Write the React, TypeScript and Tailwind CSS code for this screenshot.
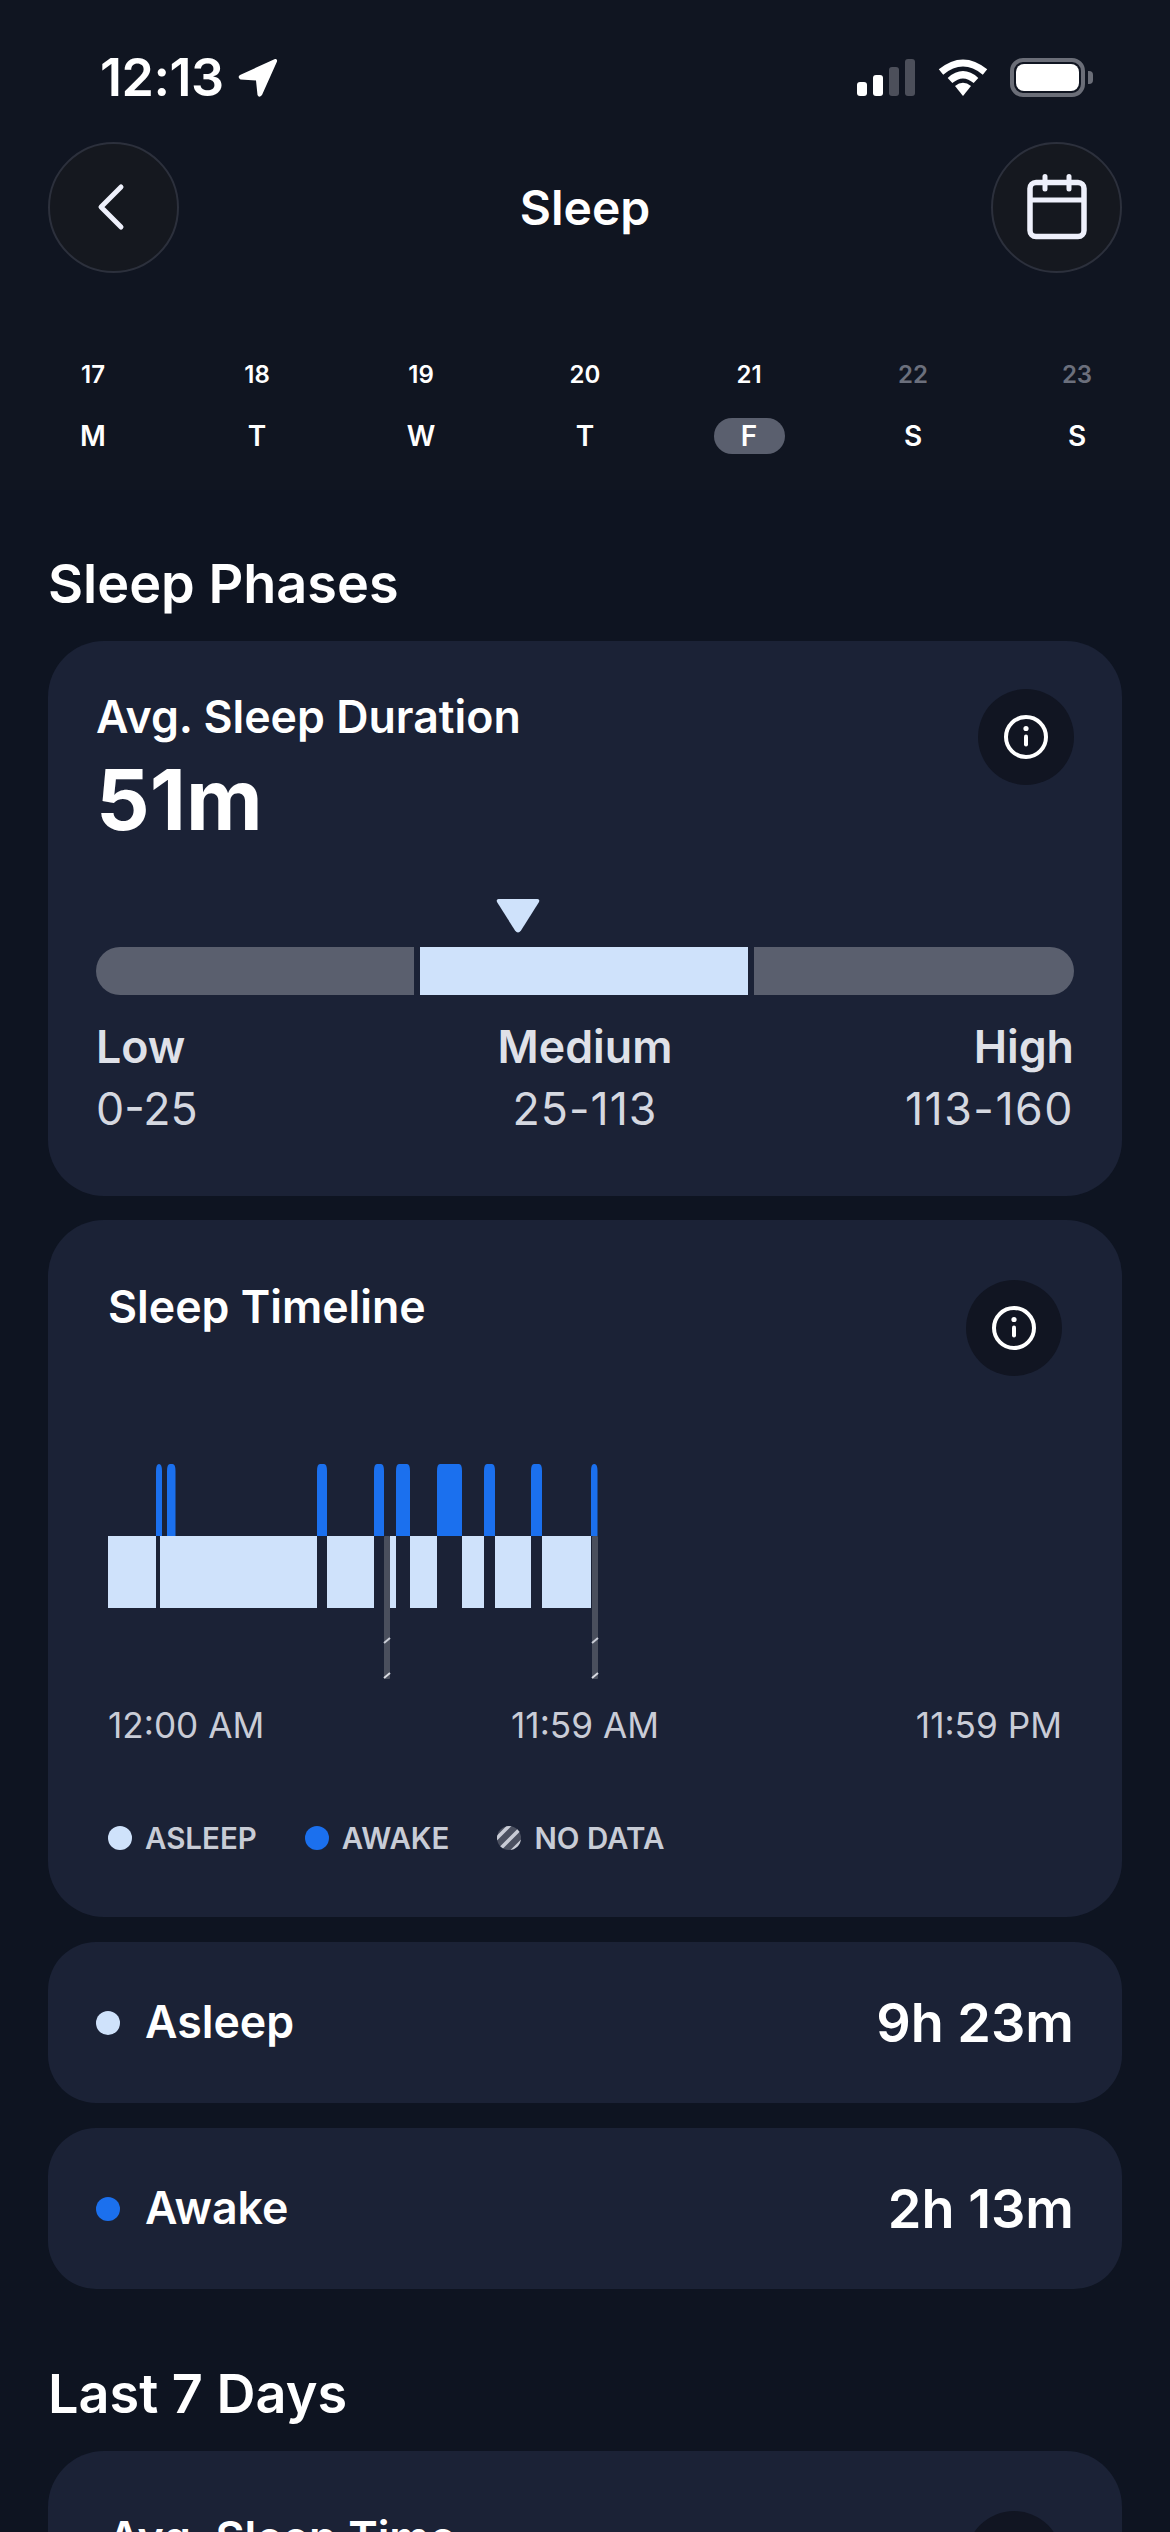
import React from "react";

const days = [
  ["17", "M", 0], ["18", "T", 0], ["19", "W", 0], ["20", "T", 0], ["21", "F", 1], ["22", "S", 2], ["23", "S", 2],
] as const;

function InfoIcon() {
  return (
    <svg width="46" height="46" viewBox="0 0 46 46" fill="none">
      <circle cx="23" cy="23" r="20" stroke="#fff" strokeWidth="4" />
      <rect x="21" y="20.5" width="4" height="12" rx="2" fill="#fff" />
      <circle cx="23" cy="14.5" r="2.6" fill="#fff" />
    </svg>
  );
}

function InfoButton() {
  return (
    <div className="w-[96px] h-[96px] rounded-full bg-[#111522] flex items-center justify-center shrink-0">
      <InfoIcon />
    </div>
  );
}

function Hatch() {
  return (
    <svg width="24" height="24" viewBox="0 0 24 24">
      <defs>
        <clipPath id="c"><circle cx="12" cy="12" r="12" /></clipPath>
      </defs>
      <g clipPath="url(#c)">
        <rect width="24" height="24" fill="#4b5060" />
        <path d="M-2 14 L14 -2 M4 22 L22 4 M12 28 L28 12" stroke="#c9ccd6" strokeWidth="3.6" />
      </g>
    </svg>
  );
}

function Timeline() {
  const x0 = 108;
  const light = [[108, 156], [160, 317], [327, 374], [390, 396], [410, 437], [462, 484], [495, 531], [542, 591]];
  const blue = [[156, 162], [167, 175.5], [317, 327], [374, 384], [396, 410], [437, 462], [484, 495], [531, 542], [591, 597.5]];
  const gray = [384, 592];
  return (
    <svg width="960" height="215" viewBox="0 0 960 215" className="block">
      {blue.map(([a, b], i) => (
        <path
          key={i}
          d={`M${a - x0} 72 V7 Q${a - x0} 0 ${a - x0 + 3} 0 H${b - x0 - 3} Q${b - x0} 0 ${b - x0} 7 V72 Z`}
          fill="#1b70ee"
        />
      ))}
      {light.map(([a, b], i) => (
        <rect key={i} x={a - x0} y="72" width={b - a} height="72" fill="#cfe2fb" />
      ))}
      {gray.map((g, i) => (
        <g key={i}>
          <rect x={g - x0} y="72" width="6" height="143" rx="1" fill="#4a4f5d" />
          <path d={`M${g - x0} 179 L${g - x0 + 6} 174`} stroke="#c9ccd6" strokeWidth="2" />
          <path d={`M${g - x0} 214 L${g - x0 + 6} 209`} stroke="#d9dbe2" strokeWidth="2" />
        </g>
      ))}
    </svg>
  );
}

function Row({ color, label, value }: { color: string; label: string; value: string }) {
  return (
    <div className="mx-[48px] h-[161px] rounded-[48px] bg-[#1b2236] flex items-center pl-[48px] pr-[48px]">
      <div className="w-[24px] h-[24px] rounded-full" style={{ backgroundColor: color }} />
      <div className="ml-[25px] text-[44.7px] font-semibold text-white leading-none">{label}</div>
      <div className="ml-auto text-[54px] font-semibold text-white leading-none">{value}</div>
    </div>
  );
}

export default function App() {
  return (
    <div
      className="w-[1170px] h-[2532px] overflow-hidden bg-[#0e1421] text-white"
      style={{ fontFamily: "Inter, sans-serif" }}
    >
      <div className="h-[490px] bg-[#101521]">
        <div className="h-[142px] flex pt-[50px] pl-[100px] pr-[85px]">
          <div className="text-[52px] font-semibold leading-[56px] tracking-[-0.5px]">12:13</div>
          <svg className="ml-[14px] mt-[8px]" width="40" height="40" viewBox="0 0 40 40">
            <path d="M37 1 Q39.5 0.5 39 3.5 L24 37 Q21 40.5 19.5 37 L18 22.5 L2.5 21.5 Q-1 19 2 17 Z" fill="#fff" />
          </svg>
          <div className="ml-auto flex items-end gap-[6px] h-[37px] mt-[9px]">
            <div className="w-[10px] h-[14px] rounded-[3px] bg-white" />
            <div className="w-[10px] h-[21px] rounded-[3px] bg-white" />
            <div className="w-[10px] h-[29px] rounded-[3px] bg-[#4c4f5a]" />
            <div className="w-[10px] h-[37px] rounded-[3px] bg-[#4c4f5a]" />
          </div>
          <svg className="ml-[23px] mt-[9px]" width="50" height="37" viewBox="0 0 50 37" fill="none">
            <path d="M3 13 Q25 -5 47 13" stroke="#fff" strokeWidth="7" />
            <path d="M12 21.5 Q25 10 38 21.5" stroke="#fff" strokeWidth="7" />
            <path d="M17 27 Q25 20.5 33 27 L25 37 Z" fill="#fff" />
          </svg>
          <div className="ml-[22px] mt-[8px] w-[75px] h-[39px] rounded-[13px] border-[4px] border-[#6b6e78] p-[2px] relative">
            <div className="w-full h-full rounded-[8px] bg-white" />
            <div className="absolute left-[74px] top-[9px] w-[5px] h-[13px] rounded-r-[4px] bg-[#6b6e78]" />
          </div>
        </div>

        <div className="mx-[48px] h-[130px] flex items-center justify-between">
          <div className="w-[131px] h-[131px] rounded-full border-[2px] border-[#2c303c] bg-[#15181f] flex items-center justify-center">
            <svg width="32" height="48" viewBox="0 0 32 48" fill="none" className="mr-[6px]">
              <path d="M26 4 L6 24 L26 44" stroke="#eef0fb" strokeWidth="5" strokeLinecap="round" strokeLinejoin="round" />
            </svg>
          </div>
          <div className="text-[48px] font-semibold leading-none pt-[2px]">Sleep</div>
          <div className="w-[131px] h-[131px] rounded-full border-[2px] border-[#2c303c] bg-[#15181f] flex items-center justify-center">
            <svg width="60" height="66" viewBox="0 0 60 66" fill="none">
              <rect x="3" y="8.5" width="54" height="54" rx="6" stroke="#eef0fb" strokeWidth="5.5" />
              <path d="M3 26 H57" stroke="#eef0fb" strokeWidth="5" />
              <path d="M18 2.5 V15 M42 2.5 V15" stroke="#eef0fb" strokeWidth="5" strokeLinecap="round" />
            </svg>
          </div>
        </div>

        <div className="mt-[86px] px-[11px] grid grid-cols-7">
          {days.map(([n, d, s], i) => (
            <div key={i} className="flex flex-col items-center">
              <div className={`text-[24px] font-semibold leading-[34px] ${s === 2 ? "text-[#6b6f7c]" : "text-white"}`}>{n}</div>
              <div
                className={`mt-[26px] h-[36px] w-[71px] rounded-[18px] flex items-center justify-center text-[28px] font-semibold leading-none ${
                  s === 1 ? "bg-[#5a5f6e]" : ""
                }`}
              >
                {d}
              </div>
            </div>
          ))}
        </div>
      </div>

      <div className="pl-[48px] mt-[61px] text-[54px] font-semibold leading-[66px]">Sleep Phases</div>

      <div className="mt-[24px] mx-[48px] h-[555px] rounded-[56px] bg-[#1b2236] px-[48px] pt-[49px]">
        <div className="flex justify-between items-start">
          <div>
            <div className="text-[44.7px] font-semibold leading-[54px] text-white">Avg. Sleep Duration</div>
            <div className="mt-[11px] text-[84px] font-bold leading-[90px] text-white">51m</div>
          </div>
          <div className="-mt-[1px]"><InfoButton /></div>
        </div>
        <div className="h-[34px] mt-[54px] relative">
          <svg className="absolute left-[400px] top-0" width="44" height="34" viewBox="0 0 44 34">
            <path d="M2.5 0 H41.5 Q44 0 43 3 L25 31.5 Q22 35.5 19 31.5 L1 3 Q0 0 2.5 0 Z" fill="#cfe2fb" />
          </svg>
        </div>
        <div className="mt-[14px] flex h-[48px] gap-[6px]">
          <div className="w-[318px] rounded-l-[24px] bg-[#5a5f6e]" />
          <div className="w-[328px] bg-[#cfe2fb]" />
          <div className="flex-1 rounded-r-[24px] bg-[#5a5f6e]" />
        </div>
        <div className="mt-[22px] grid grid-cols-3 text-[44.7px] leading-[60px] text-[#dfe1e8]">
          <div className="flex flex-col items-start">
            <div className="font-semibold">Low</div>
            <div className="mt-[2px] font-normal text-[#d5d8e0]">0-25</div>
          </div>
          <div className="flex flex-col items-center">
            <div className="font-semibold">Medium</div>
            <div className="mt-[2px] font-normal text-[#d5d8e0] tracking-[1px]">25-113</div>
          </div>
          <div className="flex flex-col items-end">
            <div className="font-semibold">High</div>
            <div className="mt-[2px] font-normal text-[#d5d8e0] tracking-[1.5px]">113-160</div>
          </div>
        </div>
      </div>

      <div className="mt-[24px] mx-[48px] h-[697px] rounded-[56px] bg-[#1b2236] pl-[60px] pr-[60px] pt-[60px]">
        <div className="flex justify-between items-start">
          <div className="text-[44.7px] font-semibold leading-[54px] text-white">Sleep Timeline</div>
          <InfoButton />
        </div>
        <div className="mt-[88px]">
          <Timeline />
        </div>
        <div className="mt-[24px] grid grid-cols-3 text-[35.2px] leading-[44px] text-[#c9ccd6]">
          <div>12:00 AM</div>
          <div className="text-center">11:59 AM</div>
          <div className="text-right">11:59 PM</div>
        </div>
        <div className="mt-[71px] flex items-center text-[29.5px] font-semibold leading-[40px] text-[#c8ccd6]">
          <div className="w-[24px] h-[24px] rounded-full bg-[#cfe2fb]" />
          <div className="ml-[13px]">ASLEEP</div>
          <div className="ml-[48px] w-[24px] h-[24px] rounded-full bg-[#1b70ee]" />
          <div className="ml-[13px]">AWAKE</div>
          <div className="ml-[48px]"><Hatch /></div>
          <div className="ml-[13px]">NO DATA</div>
        </div>
      </div>

      <div className="mt-[25px]">
        <Row color="#cfe2fb" label="Asleep" value="9h 23m" />
      </div>
      <div className="mt-[25px]">
        <Row color="#1b70ee" label="Awake" value="2h 13m" />
      </div>

      <div className="pl-[48px] mt-[72px] text-[54px] font-semibold leading-[66px]">Last 7 Days</div>

      <div className="mt-[24px] mx-[48px] h-[400px] rounded-[56px] bg-[#1b2236] pl-[60px] pr-[60px] pt-[60px]">
        <div className="flex justify-between items-start">
          <div className="text-[44.7px] font-semibold leading-[54px] text-white">Avg. Sleep Time</div>
          <InfoButton />
        </div>
      </div>
    </div>
  );
}
